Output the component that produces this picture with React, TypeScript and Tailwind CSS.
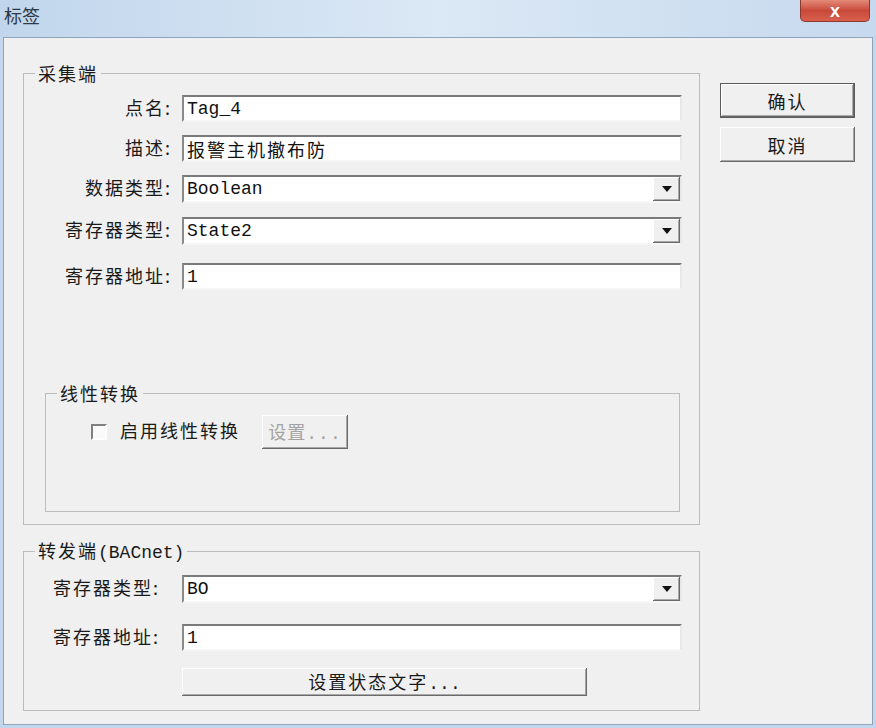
import React from "react";

const cjk = "font-['Noto_Sans_CJK_SC',sans-serif]";
const mono = "font-['Liberation_Mono','Noto_Sans_CJK_SC',monospace]";

const raised =
  "bg-[#f0f0f0] shadow-[inset_-1px_-1px_0_#6a6a6a,inset_1px_1px_0_#ffffff,inset_-2px_-2px_0_#a8a8a8]";

function Caret() {
  return (
    <svg width="10" height="6" viewBox="0 0 10 6">
      <path d="M0 0H10L5 6Z" fill="#111" />
    </svg>
  );
}

function Field({
  value,
  combo,
  cn,
  height = "h-[27px]",
}: {
  value: string;
  combo?: boolean;
  cn?: boolean;
  height?: string;
}) {
  return (
    <div
      className={`flex ${height} w-[500px] items-center border-2 border-t-[#7a7a7a] border-l-[#8a8a8a] border-b-[#f6f6f6] border-r-[#e8e8e8] bg-white`}
    >
      <span
        className={`pl-[3px] text-[18px] leading-none text-[#111] ${
          cn ? `${cjk} tracking-[2px]` : mono
        }`}
      >
        {value}
      </span>
      {combo && (
        <div
          className={`ml-auto flex h-full w-[27px] items-center justify-center ${raised}`}
        >
          <Caret />
        </div>
      )}
    </div>
  );
}

function Label({ text }: { text: string }) {
  return (
    <span className={`${cjk} text-[18px] leading-none tracking-[2px] text-[#1a1a1a]`}>
      {text}
    </span>
  );
}

function Legend({ children }: { children: React.ReactNode }) {
  return (
    <legend
      className={`ml-[11px] px-[3px] text-[18px] leading-[24px] tracking-[2px] text-[#1a1a1a] ${cjk}`}
    >
      {children}
    </legend>
  );
}

function Row({ label, children, mt = "" }: { label: string; children: React.ReactNode; mt?: string }) {
  return (
    <div className={`flex items-center ${mt}`}>
      <div className="w-[158px] pr-[10px] text-right">
        <Label text={label} />
      </div>
      {children}
    </div>
  );
}

export default function App() {
  return (
    <div className="flex h-[728px] w-[876px] flex-col overflow-hidden bg-[#c3d7ec]">
      {/* title bar */}
      <div className="flex h-[37px] shrink-0 items-start justify-between bg-gradient-to-r from-[#c1d6ec] via-[#dbe8f5] to-[#c6d9ee]">
        <span className={`${cjk} ml-[4px] mt-[5px] text-[18px] leading-[20px] text-[#2e3a46]`}>
          标签
        </span>
        <div className="mr-[6px] flex h-[22px] w-[70px] items-center justify-center rounded-b-[5px] border border-t-0 border-[#8b3a2f] bg-gradient-to-b from-[#e48a79] via-[#c8493a] to-[#d9604c]">
          <span className="font-['Liberation_Sans',sans-serif] text-[18px] font-bold leading-none text-white">
            x
          </span>
        </div>
      </div>

      {/* client area */}
      <div className="mx-[3px] mb-[6px] flex flex-1 border border-[#8ea4be] bg-[#f0f0f0] pl-[19px] pt-[23px] pb-[13px]">
        {/* left column */}
        <div className="flex w-[677px] flex-col">
          <fieldset className="border border-[#bcbcbc] pb-[12px]">
            <Legend>采集端</Legend>
            <div className="flex flex-col pt-[10px]">
              <Row label="点名:">
                <Field value="Tag_4" />
              </Row>
              <Row label="描述:" mt="mt-[13px]">
                <Field value="报警主机撤布防" cn />
              </Row>
              <Row label="数据类型:" mt="mt-[13px]">
                <Field value="Boolean" combo height="h-[28px]" />
              </Row>
              <Row label="寄存器类型:" mt="mt-[14px]">
                <Field value="State2" combo height="h-[28px]" />
              </Row>
              <Row label="寄存器地址:" mt="mt-[18px]">
                <Field value="1" />
              </Row>

              <fieldset className="ml-[21px] mr-[19px] mt-[91px] h-[131px] border border-[#bcbcbc]">
                <Legend>线性转换</Legend>
                <div className="mt-[10px] flex items-center pl-[45px]">
                  <div className="h-[16px] w-[16px] border-2 border-t-[#808080] border-l-[#808080] border-b-[#ffffff] border-r-[#ffffff] bg-[#fafafa]" />
                  <span className="ml-[13px]">
                    <Label text="启用线性转换" />
                  </span>
                  <div
                    className={`ml-[22px] flex h-[34px] w-[86px] items-center justify-center ${raised}`}
                  >
                    <span className={`${cjk} text-[18px] leading-none tracking-[1px] text-[#a3a3a3]`}>
                      设置<span className={mono}>...</span>
                    </span>
                  </div>
                </div>
              </fieldset>
            </div>
          </fieldset>

          <fieldset className="mt-[13px] border border-[#bcbcbc] pb-[14px]">
            <Legend>
              转发端<span className={`${mono} tracking-normal`}>(BACnet)</span>
            </Legend>
            <div className="flex flex-col pt-[10px]">
              <div className="flex items-center">
                <div className="w-[158px] pl-[29px]">
                  <Label text="寄存器类型:" />
                </div>
                <Field value="BO" combo height="h-[28px]" />
              </div>
              <div className="mt-[21px] flex items-center">
                <div className="w-[158px] pl-[29px]">
                  <Label text="寄存器地址:" />
                </div>
                <Field value="1" />
              </div>
              <div className="mt-[17px] flex">
                <div
                  className={`ml-[158px] flex h-[28px] w-[405px] items-center justify-center ${raised}`}
                >
                  <span className={`${cjk} text-[18px] leading-none tracking-[2px] text-[#1a1a1a]`}>
                    设置状态文字<span className={`${mono} tracking-normal`}>...</span>
                  </span>
                </div>
              </div>
            </div>
          </fieldset>
        </div>

        {/* right column */}
        <div className="ml-[20px] flex flex-col gap-[9px] pt-[22px]">
          <div
            className={`flex h-[35px] w-[135px] items-center justify-center border border-[#5a5a5a] ${raised}`}
          >
            <Label text="确认" />
          </div>
          <div className={`flex h-[35px] w-[135px] items-center justify-center ${raised}`}>
            <Label text="取消" />
          </div>
        </div>
      </div>
    </div>
  );
}
